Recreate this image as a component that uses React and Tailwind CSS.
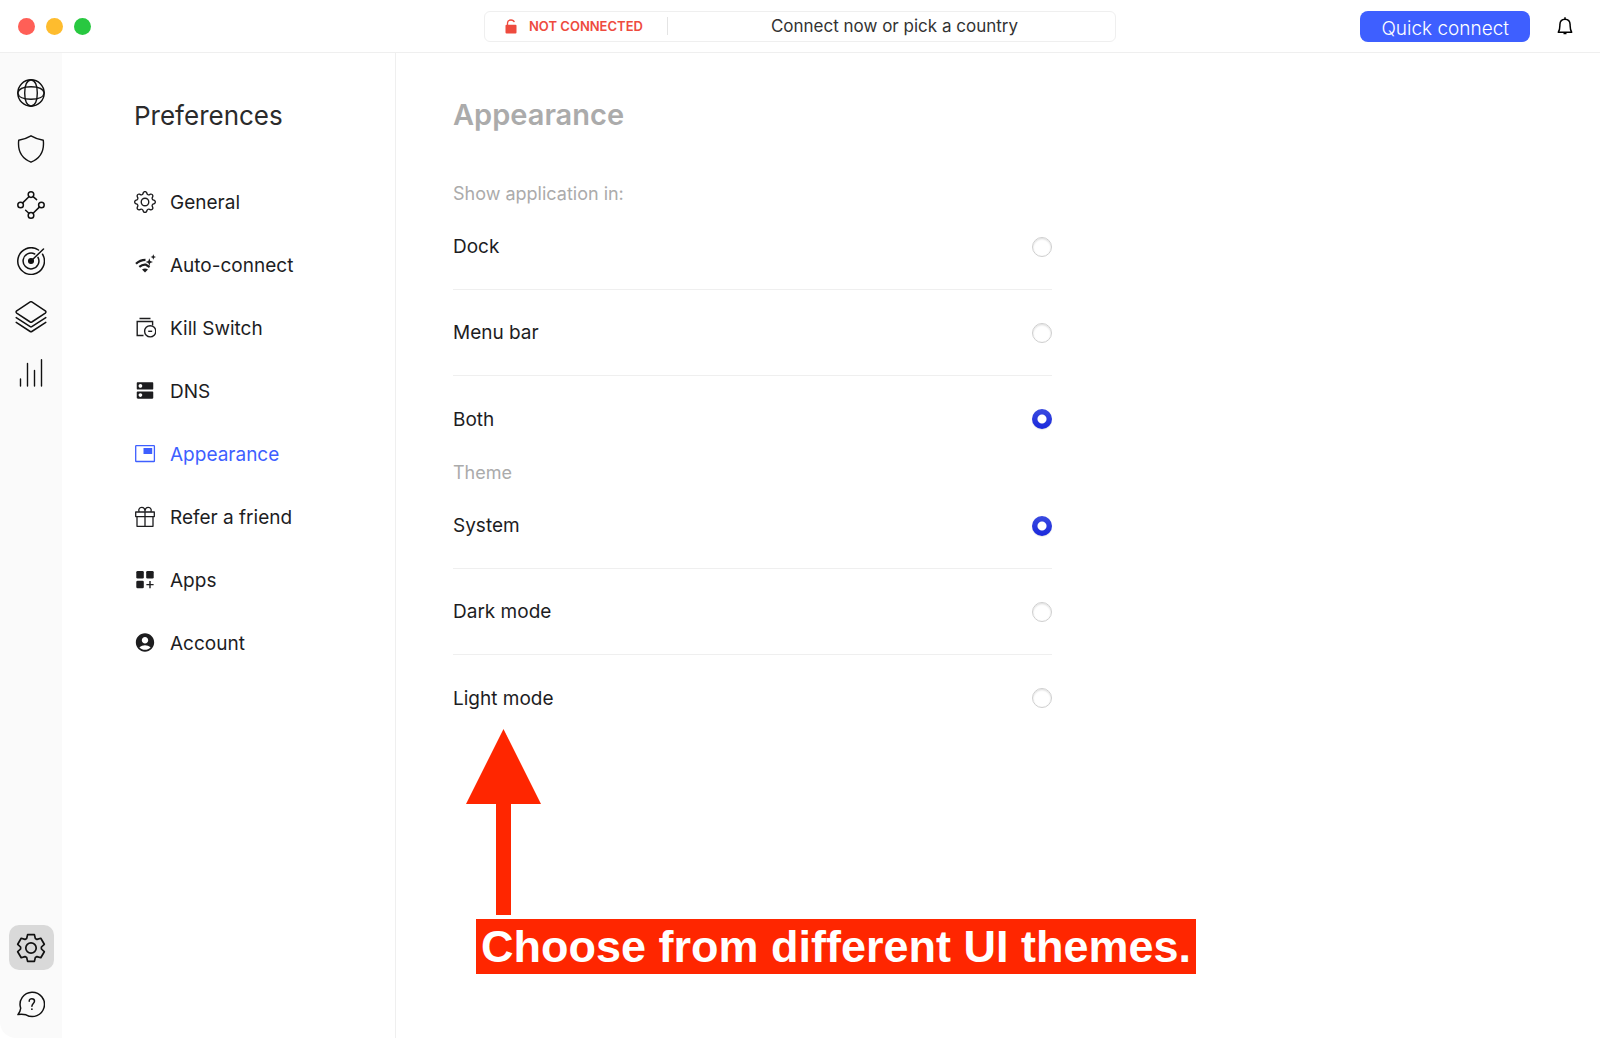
import { useState } from "react"
import { BsGear } from "react-icons/bs"
import { MdAccountCircle, MdDns } from "react-icons/md"

// Iconos de la barra lateral
const GlobeIcon = () => (
    <svg className="size-7" viewBox="0 0 28 28" fill="none" stroke="currentColor" strokeWidth="1.4">
        <circle cx="14" cy="14" r="13.2" />
        <path d="M14 .8C9.8 1.5 7.7 7 7.7 14S9.8 26.5 14 27.2C18.2 26.5 20.3 21 20.3 14S18.2 1.5 14 .8Z" />
        <path d="M.8 14C1.5 9.8 7 7.7 14 7.7S26.5 9.8 27.2 14C26.5 18.2 21 20.3 14 20.3S1.5 18.2 .8 14Z" />
    </svg>
)

const ShieldIcon = () => (
    <svg className="size-7" viewBox="0 0 28 28" fill="none" stroke="currentColor" strokeWidth="1.4" strokeLinejoin="round">
        <path d="M14 .8C17.5 2.9 21.5 4.3 26.3 5.3C27.3 14.5 24 23 14 27.2C4 23 .7 14.5 1.7 5.3C6.5 4.3 10.5 2.9 14 .8Z" />
    </svg>
)

const MeshIcon = () => (
    <svg className="size-7" viewBox="0 0 28 28" fill="none" stroke="currentColor" strokeWidth="1.5" strokeLinecap="round">
        <circle cx="14" cy="3.6" r="2.8" />
        <circle cx="3.6" cy="14" r="2.8" />
        <circle cx="24.4" cy="14" r="2.8" />
        <circle cx="14" cy="24.4" r="2.8" />
        <path d="M5.7 11.9 11.9 5.7M22.3 16.1 16.1 22.3M16.1 5.7 19.6 8.6M11.9 22.3 8.6 19.2" />
    </svg>
)

const RadarIcon = () => (
    <svg className="size-7" viewBox="0 0 28 28" fill="none" stroke="currentColor" strokeWidth="1.5" strokeLinecap="round">
        <path d="M21.500 3A13.300 13.300 0 1 0 25.500 7.200" />
        <path d="M17.700 7A7.900 7.900 0 1 0 21 10.300" />
        <circle cx="14" cy="14" r="2.300" fill="currentColor" />
        <path d="M14 14 26.500 2" />
    </svg>
)

const LayersIcon = () => (
    <svg className="size-8" viewBox="0 0 32 32" fill="none" stroke="currentColor" strokeWidth="1.5" strokeLinecap="round" strokeLinejoin="round">
        <path d="M15.2 .9Q16 .5 16.8 .9L30.3 9.900Q31.600 11 30.300 12.100L16.800 21Q16 21.500 15.200 21L1.700 12.100Q.4 11 1.700 9.900Z" />
        <path d="M1.200 16.600 15.200 25.700Q16 26.200 16.800 25.700L30.800 16.600" />
        <path d="M1.200 21.400 15.200 30.500Q16 31 16.800 30.500L30.800 21.400" />
    </svg>
)

const StatsIcon = () => (
    <svg className="size-7" viewBox="0 0 28 28" fill="none" stroke="currentColor" strokeWidth="1.4" strokeLinecap="round">
        <path d="M3.500 20V27M10.500 4.500V27M17.500 11.500V27M24.500 .8V27" />
    </svg>
)

const SettingsIcon = () => (
    <svg className="size-[30px]" viewBox="-15 -15 30 30" fill="none" stroke="currentColor" strokeWidth="1.7" strokeLinejoin="round">
        <path d="M-3.4-13.4H3.4L4.3-9.6 6-8.6 9.8-9.7 13.3-3.7 10.4-1V1L13.3 3.7 9.8 9.7 6 8.6 4.3 9.6 3.4 13.4H-3.4L-4.3 9.6-6 8.6-9.8 9.7-13.3 3.7-10.4 1V-1L-13.3-3.7-9.8-9.7-6-8.6-4.3-9.6Z" />
        <circle r="5.2" />
    </svg>
)

const HelpIcon = () => (
    <svg className="size-7" viewBox="0 0 28 28" fill="none" stroke="currentColor" strokeWidth="1.5" strokeLinecap="round" strokeLinejoin="round">
        <path d="M3.700 18.200A12.200 12.200 0 1 1 9 24.800Q5 24 .9 24.600Q3.400 21.500 3.700 18.200Z" />
        <path d="M12.200 11.200C12.200 7.700 17.500 7.900 17.500 11.100C17.500 13.500 14.900 13.600 14.900 16.300" />
        <path d="M14.900 19V19.200" strokeWidth="1.700" />
    </svg>
)

// Iconos del menú de preferencias
const AutoConnectIcon = () => (
    <svg className="size-[22px]" viewBox="0 0 22 22" fill="currentColor">
        <path d="M2 9.800Q6 5.800 11.500 5.800" fill="none" stroke="currentColor" strokeWidth="2.200" />
        <path d="M5.300 12.900Q8.500 10.200 12 10.700L15.600 13" fill="none" stroke="currentColor" strokeWidth="2.200" />
        <path d="M8 15.600Q11 13.600 14 15.600L11 18.600Z" />
        <path d="M15.300 4.200 16.300 7 19 8 16.300 9 15.300 11.800 14.300 9 11.600 8 14.300 7Z" />
        <path d="M19.300 .2 20.100 2.200 22 3 20.100 3.800 19.300 5.800 18.500 3.800 16.600 3 18.500 2.200Z" />
    </svg>
)

const KillSwitchIcon = () => (
    <svg className="size-[22px]" viewBox="0 0 22 22" fill="none" stroke="currentColor" strokeWidth="1.4">
        <path d="M5.500 1.500H16.500M9.500 18.500H3.200V4.500H18.600V8.500" />
        <circle cx="16.200" cy="14.300" r="5.600" />
        <path d="M14.200 14.300H18.200" />
    </svg>
)

const AppearanceIcon = () => (
    <svg className="size-[22px]" viewBox="0 0 22 22" fill="none" stroke="currentColor" strokeWidth="1.3">
        <rect x="1.700" y="2.700" width="18.700" height="15.800" rx=".6" />
        <rect x="9.500" y="5" width="8.700" height="6" fill="currentColor" stroke="none" />
    </svg>
)

const GiftIcon = () => (
    <svg className="size-[22px]" viewBox="0 0 22 22" fill="none" stroke="currentColor" strokeWidth="1.3" strokeLinejoin="round">
        <path d="M1.700 6H20.300V10.600H1.700ZM3 10.600H19V20.300H3ZM11 6V20.300" />
        <path d="M11 5.800C11 2.800 9.700 1.400 7.800 1.400C5 1.400 4.200 4 5.300 5.800M11 5.800C11 2.800 12.300 1.400 14.200 1.400C17 1.400 17.800 4 16.700 5.800" />
    </svg>
)

const AppsIcon = () => (
    <svg className="size-[22px]" viewBox="0 0 22 22" fill="currentColor">
        <rect x="2.300" y="2" width="7.500" height="7.500" rx="1.300" />
        <rect x="12.200" y="2" width="7.500" height="7.500" rx="1.300" />
        <rect x="2.300" y="11.800" width="7.500" height="7.500" rx="1.300" />
        <path d="M16 12V19.200M12.400 15.600H19.600" stroke="currentColor" strokeWidth="1.400" />
    </svg>
)

const LockIcon = () => (
    <svg className="h-[15px] w-3" viewBox="0 0 12 15">
        <rect x=".5" y="5.800" width="11" height="8.700" rx="1" fill="currentColor" />
        <path d="M2.500 6.500V4Q2.700 1 6 1Q8.700 1 9.300 3.200" fill="none" stroke="currentColor" strokeWidth="1.300" />
    </svg>
)

const BellIcon = () => (
    <svg className="h-[18px] w-4" viewBox="0 0 16 18" fill="none" stroke="currentColor" strokeWidth="1.5" strokeLinejoin="round">
        <path d="M1.300 15.200C3 13 2.800 10.500 2.900 7.500C3 4.200 5 2.200 8 2.200S13 4.200 13.100 7.500C13.200 10.500 13 13 14.700 15.200Z" />
        <path d="M8 .3V2M6.500 16.600H9.500" />
    </svg>
)

const railItems = [
    { label: "Countries", icon: <GlobeIcon /> },
    { label: "Threat protection", icon: <ShieldIcon /> },
    { label: "Meshnet", icon: <MeshIcon /> },
    { label: "Dark web monitor", icon: <RadarIcon /> },
    { label: "Presets", icon: <LayersIcon /> },
    { label: "Statistics", icon: <StatsIcon /> },
]

const menuItems = [
    { label: "General", icon: <BsGear className="size-[22px]" /> },
    { label: "Auto-connect", icon: <AutoConnectIcon /> },
    { label: "Kill Switch", icon: <KillSwitchIcon /> },
    { label: "DNS", icon: <MdDns className="size-[23px]" /> },
    { label: "Appearance", icon: <AppearanceIcon /> },
    { label: "Refer a friend", icon: <GiftIcon /> },
    { label: "Apps", icon: <AppsIcon /> },
    { label: "Account", icon: <MdAccountCircle className="size-[23px]" /> },
]

const RadioGroup = ({ title, name, options, value, onChange }) => (
    <fieldset>
        <legend className="text-[18px] leading-[21px] text-[#ababab]">{title}</legend>
        <div className="divide-y divide-[#efefef]">
            {options.map((option) => (
                <label key={option} className="flex h-[86px] items-center justify-between text-[19px] text-[#1d1d1f]">
                    <span className="pt-0.5">{option}</span>
                    <input
                        type="radio"
                        name={name}
                        checked={value === option}
                        onChange={() => onChange(option)}
                        className="size-5 appearance-none rounded-full border border-[#cfcfcf] bg-white shadow-[inset_0_1px_2px_rgba(0,0,0,0.14)] checked:border-0 checked:bg-[radial-gradient(circle,#ffffff_4px,transparent_5px),linear-gradient(#3a4be0,#1a28dc)] checked:shadow-[0_1px_1px_rgba(0,0,0,0.1)]"
                    />
                </label>
            ))}
        </div>
    </fieldset>
)

const App = () => {
    const [section, setSection] = useState("Appearance")
    const [showIn, setShowIn] = useState("Both")
    const [theme, setTheme] = useState("System")

    return (
        <div className="flex min-h-screen flex-col bg-white font-['Inter','Liberation_Sans',sans-serif] text-[#1d1d1f]">
            {/* Barra superior */}
            <header className="grid h-[53px] grid-cols-[1fr_632px_1fr] items-center border-b border-[#efefef]">
                <div className="flex gap-[11px] pl-[18px]">
                    <span className="size-[17px] rounded-full bg-[#ff5f57]"></span>
                    <span className="size-[17px] rounded-full bg-[#febc2e]"></span>
                    <span className="size-[17px] rounded-full bg-[#28c840]"></span>
                </div>
                <div className="flex h-[31px] items-center rounded-md border border-[#efefef]">
                    <div className="flex h-[18px] items-center gap-3 border-r border-[#e4e4e4] pr-6 pl-5 text-[13px] font-semibold text-[#ee4b3e]">
                        <LockIcon />
                        <span className="pt-0.5">NOT CONNECTED</span>
                    </div>
                    <p className="flex-1 pt-0.5 pl-1.5 text-center text-[17px] text-[#333333]">Connect now or pick a country</p>
                </div>
                <div className="flex items-center justify-end gap-[27px] pr-[27px]">
                    <button className="h-[31px] rounded-lg bg-[#3e5fff] px-[21px] pt-1 text-[19px] leading-7 font-light text-white">
                        Quick connect
                    </button>
                    <button aria-label="Notifications" className="text-black">
                        <BellIcon />
                    </button>
                </div>
            </header>

            <div className="flex flex-1">
                {/* Barra lateral */}
                <nav className="flex w-[62px] shrink-0 flex-col items-center rounded-bl-2xl bg-[#fafafa] pt-3 pb-3 text-[#111111]">
                    {railItems.map((item) => (
                        <button key={item.label} aria-label={item.label} className="flex h-14 w-full items-center justify-center">
                            {item.icon}
                        </button>
                    ))}
                    <button aria-label="Settings" className="mt-auto flex size-[45px] items-center justify-center rounded-[10px] bg-[#d9d9d9]">
                        <SettingsIcon />
                    </button>
                    <button aria-label="Help" className="mt-[11px] flex size-[45px] items-center justify-center">
                        <HelpIcon />
                    </button>
                </nav>

                {/* Menú de preferencias */}
                <aside className="w-[334px] shrink-0 border-r border-[#efefef] pt-[45px] pl-[72px]">
                    <h2 className="text-[26px] leading-9 text-[#2b2b2b]">Preferences</h2>
                    <ul className="mt-9">
                        {menuItems.map((item) => (
                            <li key={item.label}>
                                <button
                                    onClick={() => setSection(item.label)}
                                    className={`flex h-[63px] items-center gap-[14px] text-[19px] ${section === item.label ? "text-[#3e5fff]" : ""}`}
                                >
                                    <span className="flex w-[22px] justify-center">{item.icon}</span>
                                    <span className="pt-1">{item.label}</span>
                                </button>
                            </li>
                        ))}
                    </ul>
                </aside>

                {/* Contenido */}
                <main className="flex-1 pt-[42px] pr-14 pl-[57px]">
                    <h1 className="text-[29px] leading-10 font-semibold text-[#ababab]">Appearance</h1>
                    <div className="mt-12 max-w-[599px]">
                        <RadioGroup title="Show application in:" name="show-in" options={["Dock", "Menu bar", "Both"]} value={showIn} onChange={setShowIn} />
                        <RadioGroup title="Theme" name="theme" options={["System", "Dark mode", "Light mode"]} value={theme} onChange={setTheme} />
                    </div>

                    {/* Indicación sobre los temas */}
                    <svg className="-mt-3 ml-[13px] h-[186px] w-[75px] text-[#ff2600]" viewBox="0 0 75 186" fill="currentColor">
                        <path d="M37.500 0 75 75H45V186H30V75H0Z" />
                    </svg>
                    <p className="mt-1 ml-[23px] w-fit bg-[#ff2600] px-[5px] font-['Liberation_Sans',sans-serif] text-[45px] leading-[55px] font-bold whitespace-nowrap text-white">
                        Choose from different UI themes.
                    </p>
                </main>
            </div>
        </div>
    )
}

export default App
